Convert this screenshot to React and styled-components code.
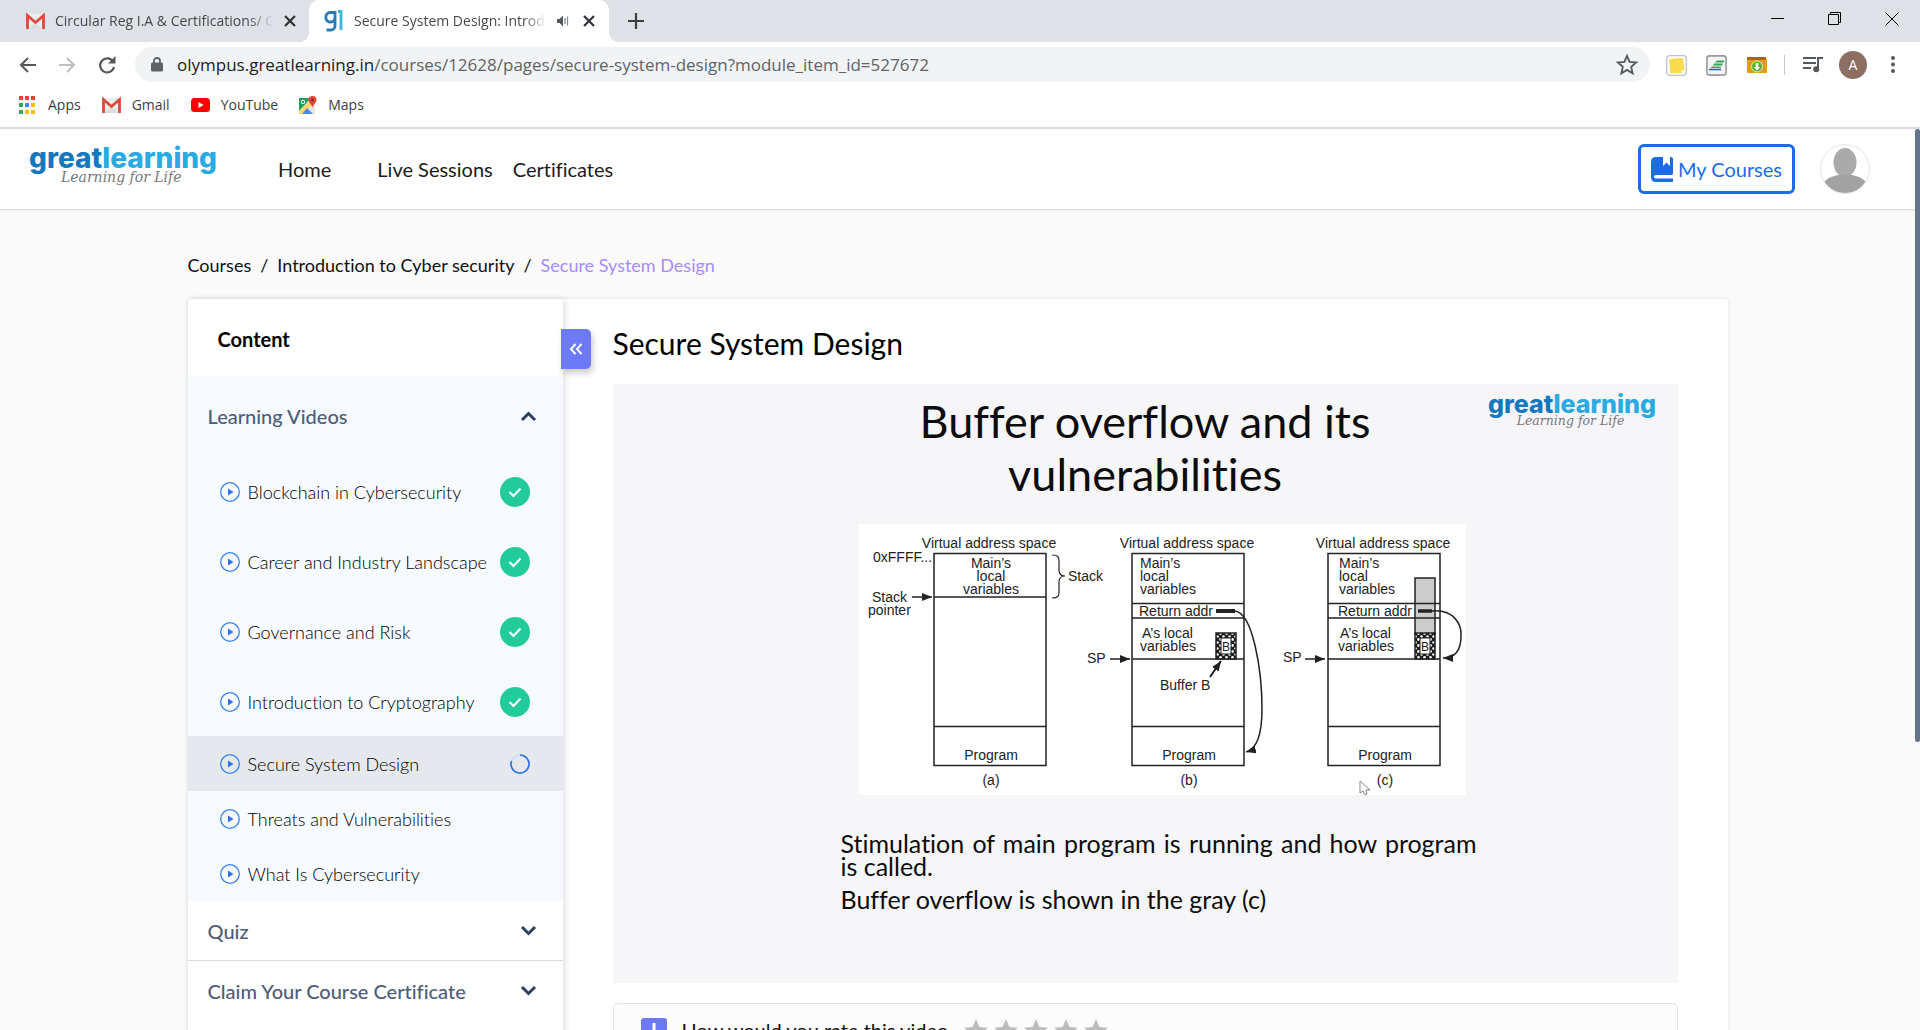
import React from "react";
import styled, { createGlobalStyle } from "styled-components";

const ui = `"Open Sans", "Noto Sans", sans-serif`;
const lato = `Lato, "Liberation Sans", sans-serif`;

const GlobalStyle = createGlobalStyle`
  *, *::before, *::after { box-sizing: border-box; }
  body { margin: 0; background: #fff; font-family: ${lato}; font-variant-ligatures: none; }
  button { font: inherit; border: 0; padding: 0; background: none; cursor: pointer; }
  a { color: inherit; text-decoration: none; }
  ul, ol { list-style: none; margin: 0; padding: 0; }
  h1, h2, p { margin: 0; font-weight: 400; }
  svg { display: block; flex: none; overflow: visible; }
`;

const Window = styled.div`
  height: 100vh;
  display: flex;
  flex-direction: column;
  overflow: hidden;
`;

/* Browser chrome */

const TabStrip = styled.div`
  display: flex;
  height: 42px;
  flex: none;
  background: #dee1e6;
  font-family: ${ui};
  font-size: 14px;
  line-height: 20px;
  color: #45494d;
`;

const Tab = styled.div`
  position: relative;
  display: flex;
  align-items: center;
  gap: 10px;
  width: ${(p) => (p.$active ? 300 : 309)}px;
  padding: 0 ${(p) => (p.$active ? 10 : 13)}px 0 ${(p) => (p.$active ? 15 : 26)}px;
  border-radius: 10px 10px 0 0;
  background: ${(p) => (p.$active ? "#fff" : "transparent")};
  ${(p) => p.$active && `
    &::before, &::after {
      content: "";
      position: absolute;
      bottom: 0;
      width: 10px;
      height: 10px;
    }
    &::before { left: -10px; background: radial-gradient(circle at 0 0, transparent 10px, #fff 10px); }
    &::after { right: -10px; background: radial-gradient(circle at 100% 0, transparent 10px, #fff 10px); }
  `}
`;

const TabTitle = styled.span`
  flex: 1;
  overflow: hidden;
  white-space: nowrap;
  mask-image: linear-gradient(to right, #000 88%, transparent);
`;

const IconButton = styled.button`
  display: grid;
  place-items: center;
  width: ${(p) => p.$w || 20}px;
  height: ${(p) => p.$h || 20}px;
  flex: none;
`;

const NewTab = styled(IconButton)`
  align-self: center;
  margin-left: 16px;
`;

const WindowControls = styled.div`
  display: flex;
  margin-left: auto;
  height: 37px;
`;

const Toolbar = styled.div`
  display: flex;
  align-items: center;
  height: 45px;
  flex: none;
  padding: 0 19px 0 11px;
`;

const NavButtons = styled.div`
  display: flex;
  width: 124px;
  gap: 8px;
`;

const AddressBar = styled.div`
  display: flex;
  align-items: center;
  flex: 1;
  height: 35px;
  margin-right: 16px;
  padding: 0 13px 0 16px;
  gap: 14px;
  border-radius: 18px;
  background: #f1f3f4;
`;

const UrlText = styled.span`
  flex: 1;
  font-family: ${ui};
  font-size: 17px;
  line-height: 24px;
  color: #5f6368;
  b { font-weight: 400; color: #202124; }
`;

const Extensions = styled.div`
  display: flex;
  align-items: center;
  gap: 18px;
`;

const Divider = styled.span`
  width: 1px;
  height: 20px;
  background: #c4c7ca;
  margin: 0 0 0 -2px;
`;

const Profile = styled.button`
  width: 28px;
  height: 28px;
  margin-left: -2px;
  border-radius: 50%;
  background: #8d6e63;
  color: #fff;
  font-family: ${ui};
  font-size: 14px;
  line-height: 28px;
`;

const Bookmarks = styled.nav`
  display: flex;
  gap: 21px;
  height: 42px;
  flex: none;
  padding: 0 18px 4px 19px;
  border-bottom: 2px solid #dadce0;
  font-family: ${ui};
  font-size: 14px;
  line-height: 20px;
  color: #3c4043;
  a { display: flex; align-items: center; gap: 11px; }
`;

/* Site */

const Viewport = styled.div`
  flex: 1;
  min-height: 0;
  display: grid;
  grid-template-columns: minmax(0, 1fr) 5px;
  background: #fafafa;
`;

const Scroller = styled.div`
  min-height: 0;
  overflow: hidden;
`;

const ScrollThumb = styled.div`
  height: 68%;
  background: #64748b;
  border-radius: 3px;
`;

const Header = styled.header`
  display: flex;
  align-items: center;
  height: 81px;
  padding: 0 45px 0 29px;
  border-bottom: 1px solid #dcdde0;
  background: #fff;
  box-shadow: 0 1px 2px rgba(0, 0, 0, 0.05);
`;

const Brand = styled.a`
  display: block;
  width: 249px;
`;

const SiteNav = styled.nav`
  display: flex;
  flex: 1;
  font-size: 20px;
  line-height: 28px;
  color: #1c1c1c;
  a { margin-right: 20px; }
  a:first-child { margin-right: 46px; }
`;

const MyCourses = styled.button`
  display: flex;
  align-items: center;
  gap: 5px;
  height: 50px;
  padding: 0 10px;
  margin-right: 25px;
  border: 3px solid #1a6ce8;
  border-radius: 6px;
  font-size: 20px;
  color: #1a6ce8;
`;

const Avatar = styled.button`
  width: 50px;
  height: 50px;
  border-radius: 50%;
  border: 1px solid #e6e6e8;
  overflow: hidden;
`;

const Page = styled.main`
  max-width: 1540px;
  margin: 0 auto;
  padding-top: 43px;
`;

const Crumbs = styled.ol`
  display: flex;
  gap: 9px;
  margin-bottom: 22px;
  font-size: 18px;
  line-height: 24px;
  color: #111;
  li { display: flex; gap: 9px; }
  li + li::before { content: "/"; }
  [aria-current] { color: #a78bfa; }
`;

const Card = styled.div`
  display: grid;
  grid-template-columns: 375px minmax(0, 1fr);
  min-height: 900px;
  border-radius: 4px;
  background: #fff;
  box-shadow: 0 0 4px rgba(30, 41, 59, 0.12);
`;

const Sidebar = styled.aside`
  position: relative;
  box-shadow: 2px 0 6px rgba(0, 0, 0, 0.12);
`;

const SidebarTitle = styled.h2`
  padding: 28px 30px 25px;
  font-size: 20px;
  line-height: 24px;
  font-weight: 700;
  color: #000;
`;

const Collapse = styled.button`
  position: absolute;
  top: 30px;
  right: -28px;
  display: grid;
  place-items: center;
  width: 30px;
  height: 40px;
  border-radius: 0 5px 5px 0;
  background: #6c7af8;
  box-shadow: 2px 4px 6px rgba(0, 0, 0, 0.2);
`;

const Section = styled.section`
  background: ${(p) => (p.$open ? "#f7faff" : "#fff")};
  border-bottom: ${(p) => (p.$open ? 0 : 1)}px solid #dcdcde;
  &:last-child { border-bottom: 0; }
`;

const SectionHead = styled.button`
  display: flex;
  align-items: center;
  justify-content: space-between;
  width: 100%;
  height: ${(p) => (p.$open ? 80 : 59)}px;
  padding: 0 27px 0 20px;
  font-size: 20px;
  line-height: 26px;
  font-weight: 500;
  color: #4e5d78;
`;

const Lesson = styled.a`
  display: flex;
  align-items: center;
  gap: 8px;
  height: ${(p) => (p.$done ? 70 : 55)}px;
  padding: 1px 33px 0 32px;
  background: ${(p) => (p.$current ? "#e5e8ed" : "transparent")};
  font-size: 18px;
  line-height: 24px;
  font-weight: 300;
  color: #000;
  white-space: nowrap;
  span { flex: 1; }
`;

const Content = styled.div`
  padding: 24px 50px;
`;

const Title = styled.h1`
  margin-bottom: 21px;
  font-size: 30px;
  line-height: 40px;
  color: #000;
`;

const Slide = styled.section`
  position: relative;
  display: flex;
  flex-direction: column;
  align-items: center;
  aspect-ratio: 1065 / 599;
  padding-top: 11px;
  background: #f6f5f8;
  color: #0c0c0c;
`;

const SlideTitle = styled.h2`
  margin-bottom: 23px;
  font-size: 45px;
  line-height: 53px;
  text-align: center;
  max-width: 500px;
`;

const SlideLogo = styled.div`
  position: absolute;
  top: 10px;
  right: 20px;
`;

const SlideText = styled.div`
  width: 636px;
  margin: 37px 0 0 27px;
  font-size: 25px;
  line-height: 23px;
  p + p { margin-top: 10px; }
  p:first-child { text-align: justify; }
`;

const Figure = styled.div`
  margin-left: 34px;
`;

const Rating = styled.div`
  display: flex;
  align-items: center;
  gap: 15px;
  height: 56px;
  margin-top: 20px;
  padding: 0 27px;
  border: 1px solid #e4e4e6;
  border-radius: 5px;
  background: #fcfcfc;
  font-size: 20px;
  line-height: 24px;
  color: #111;
  span { padding-bottom: 3px; }
`;

const Stars = styled.div`
  display: flex;
  gap: 4px;
`;

const StarButton = styled(IconButton)`
  width: 26px;
  height: 26px;
`;

const Logo = ({ width }) => (
  <svg width={width} viewBox="0 0 190 44" role="img" aria-label="great learning, Learning for Life">
    <text x="0" y="21" fontFamily="Inter, sans-serif" fontWeight="800" fontSize="28" fill="#1478bf">
      great<tspan fill="#29aae1">learning</tspan>
    </text>
    <text x="32" y="35" fontFamily='"DejaVu Serif", serif' fontStyle="italic" fontSize="14" fill="#77787b">
      Learning for Life
    </text>
  </svg>
);

const Gmail = () => (
  <svg width="19" height="15" viewBox="0 0 19 15">
    <path d="M1 0h17v15H1z" fill="#ececec" />
    <path d="M3 15 9.500 8l6.500 7z" fill="#dcdcdc" />
    <path d="M1.500 15V1.500l8 7 8-7V15" fill="none" stroke="#d94a3d" strokeWidth="2.800" />
  </svg>
);

const Cross = () => (
  <svg width="12" height="12" viewBox="0 0 12 12" stroke="#303236" strokeWidth="2.200">
    <path d="M1 1l10 10M11 1 1 11" />
  </svg>
);

const GlIcon = () => (
  <svg width="20" height="22" viewBox="0 0 20 22" fill="none" strokeWidth="2.800">
    <path d="M11 2.500H6A4 4.500 0 1 0 6 12h1a4 4.500 0 0 0 4-4.500V16a4 4 0 0 1-4 4H2.500M11 1v9" stroke="#2a7ab8" />
    <path d="M14 1.500h3V20" stroke="#38b6e0" />
  </svg>
);

const Speaker = () => (
  <svg width="12" height="12" viewBox="0 0 12 12">
    <path d="M0 4h2.500L6 .5v11L2.500 8H0z" fill="#54585c" />
    <path d="M8 3v6M10.500 1.500v9" stroke="#8a8d91" strokeWidth="1.300" />
  </svg>
);

const Arrow = ({ color, flip }) => (
  <svg width="17" height="16" viewBox="0 0 17 16" fill="none" stroke={color} strokeWidth="2">
    <path d={flip ? "M0 8h15M8 1l7 7-7 7" : "M17 8H2M9 1 2 8l7 7"} />
  </svg>
);

const Reload = () => (
  <svg width="18" height="18" viewBox="0 0 18 18">
    <path d="M15 5.500A7 7 0 1 0 16 11" fill="none" stroke="#55585c" strokeWidth="2.200" />
    <path d="M17.500 0v7.500H10z" fill="#55585c" />
  </svg>
);

const Lock = () => (
  <svg width="12" height="15" viewBox="0 0 12 15">
    <path d="M3 7V4a3 3 0 0 1 6 0v3" fill="none" stroke="#5f6368" strokeWidth="1.800" />
    <rect y="5.500" width="12" height="9" rx="1.500" fill="#5f6368" />
  </svg>
);

const starPath = "M12 1l3.100 7.300 7.900.7-6 5.200 1.800 7.800L12 17.900 5.200 22 7 14.200 1 9l7.900-.7z";

const Chevron = ({ up }) => (
  <svg width="15" height="10" viewBox="0 0 15 10" fill="none" stroke="#2f3f5f" strokeWidth="3">
    <path d={up ? "M1 9l6.500-6.500L14 9" : "M1 1l6.500 6.500L14 1"} />
  </svg>
);

const Play = () => (
  <svg width="20" height="20" viewBox="0 0 20 20">
    <circle cx="10" cy="10" r="9.300" fill="none" stroke="#3b82f6" strokeWidth="1.300" />
    <path d="M8 6.500v7l5.500-3.500z" fill="#2f74ea" />
  </svg>
);

const Check = () => (
  <svg width="30" height="30" viewBox="0 0 30 30">
    <circle cx="15" cy="15" r="15" fill="#22cb9c" />
    <path d="M9.500 15l4 4 7-7.500" fill="none" stroke="#fff" strokeWidth="2.200" />
  </svg>
);

const Spinner = () => (
  <svg width="20" height="20" viewBox="0 0 20 20" fill="none" strokeWidth="1.700">
    <circle cx="10" cy="10" r="9" stroke="#c9dcfb" />
    <path d="M10 1a9 9 0 1 1-8.500 6" stroke="#2f74ea" />
  </svg>
);

const Space = ({ x, label, children }) => (
  <g>
    <rect x={x} y="29.500" width="112" height="212" fill="none" />
    <path d={`M${x} 202.500h112`} />
    <g stroke="none" fill="#222">
      <text x={x + 55} y="24" textAnchor="middle">Virtual address space</text>
      <text x={x + 57} y="236" textAnchor="middle">Program</text>
      <text x={x + 57} y="261" textAnchor="middle">{label}</text>
    </g>
    {children}
  </g>
);

const BufferB = ({ x }) => (
  <g>
    <rect x={x} y="109" width="20" height="26" fill="url(#speckle)" />
    <rect x={x + 5} y="114" width="10" height="16" fill="#fff" strokeWidth="1" />
    <text x={x + 10} y="127" textAnchor="middle" fontSize="12" stroke="none" fill="#222">B</text>
  </g>
);

const Diagram = () => (
  <svg width="607" height="271" viewBox="0 0 607 271" fontFamily='"Liberation Sans", Arial, sans-serif' fontSize="14" stroke="#222" strokeWidth="1.500" role="img" aria-label="Virtual address space diagrams">
    <defs>
      <pattern id="speckle" width="6" height="6" patternUnits="userSpaceOnUse">
        <rect width="6" height="6" fill="#1c1c1c" stroke="none" />
        <circle cx="1.500" cy="1.500" r="1.400" fill="#fff" stroke="none" />
        <circle cx="4.500" cy="4.500" r="1.300" fill="#fff" stroke="none" />
      </pattern>
      <marker id="head" viewBox="0 0 10 8" refX="10" refY="4" markerWidth="10" markerHeight="8" markerUnits="userSpaceOnUse" orient="auto">
        <path d="M0 0l10 4-10 4z" fill="#222" stroke="none" />
      </marker>
    </defs>
    <rect width="607" height="271" fill="#fff" stroke="none" />
    <Space x={75} label="(a)">
      <path d="M75 73h112" />
      <path d="M53 73h20" markerEnd="url(#head)" />
      <path d="M193 31c6 0 7 2 7 6v9c0 4 2 6 6 6-4 0-6 2-6 6v10c0 4-1 6-7 6" fill="none" strokeWidth="1.200" />
    </Space>
    <Space x={273} label="(b)">
      <path d="M273 79.500h112M273 94h112M273 135h112" />
      <path d="M251 135h20" markerEnd="url(#head)" />
      <BufferB x={357} />
      <path d="M357 87h19" strokeWidth="4" />
      <path d="M376 87c18 2 27 60 27 98 0 26-5 40-16 43" fill="none" markerEnd="url(#head)" />
      <path d="M351 153l11-16" strokeWidth="2" markerEnd="url(#head)" />
    </Space>
    <Space x={469} label="(c)">
      <rect x="556" y="54" width="20" height="56" fill="#ccc" />
      <path d="M469 79.500h112M469 94h112M469 135h112" />
      <path d="M446 135h20" markerEnd="url(#head)" />
      <BufferB x={556} />
      <path d="M559 87h14" strokeWidth="3.500" />
      <path d="M573 87c22-2 30 14 29 25 0 14-6 22-18 22" fill="none" markerEnd="url(#head)" />
    </Space>
    <g stroke="none" fill="#222">
      <text x="14" y="38">0xFFFF...</text>
      <text x="13" y="78">Stack</text>
      <text x="9" y="91">pointer</text>
      <g textAnchor="middle">
        <text x="132" y="44">Main’s</text>
        <text x="132" y="57">local</text>
        <text x="132" y="70">variables</text>
      </g>
      <text x="209" y="57">Stack</text>
      <text x="281" y="44">Main’s</text>
      <text x="281" y="57">local</text>
      <text x="281" y="70">variables</text>
      <text x="280" y="92">Return addr</text>
      <text x="283" y="114">A’s local</text>
      <text x="281" y="127">variables</text>
      <text x="228" y="139">SP</text>
      <text x="301" y="166">Buffer B</text>
      <text x="480" y="44">Main’s</text>
      <text x="480" y="57">local</text>
      <text x="480" y="70">variables</text>
      <text x="479" y="92">Return addr</text>
      <text x="481" y="114">A’s local</text>
      <text x="479" y="127">variables</text>
      <text x="424" y="138">SP</text>
    </g>
    <path d="M501 257v12l3-2 2 4 2-1-1-4h4z" fill="#fff" stroke="#888" strokeWidth="1" />
  </svg>
);

const lessons = [
  ["Blockchain in Cybersecurity", "done"],
  ["Career and Industry Landscape", "done"],
  ["Governance and Risk", "done"],
  ["Introduction to Cryptography", "done"],
  ["Secure System Design", "current"],
  ["Threats and Vulnerabilities", ""],
  ["What Is Cybersecurity", ""],
];

const appColors = ["#ea4335", "#ea4335", "#ea4335", "#34a853", "#4285f4", "#fbbc05", "#34a853", "#fbbc05", "#fbbc05"];

function BrowserChrome() {
  return (
    <>
      <TabStrip>
        <Tab>
          <Gmail />
          <TabTitle>Circular Reg I.A &amp; Certifications/ C</TabTitle>
          <IconButton aria-label="Close tab" $w={12}><Cross /></IconButton>
        </Tab>
        <Tab $active>
          <GlIcon />
          <TabTitle>Secure System Design: Introd</TabTitle>
          <Speaker />
          <IconButton aria-label="Close tab"><Cross /></IconButton>
        </Tab>
        <NewTab aria-label="New tab" $w={22}>
          <svg width="16" height="16" viewBox="0 0 16 16" stroke="#3c4043" strokeWidth="2.200"><path d="M8 0v16M0 8h16" /></svg>
        </NewTab>
        <WindowControls>
          <IconButton aria-label="Minimize" $w={57} $h={37}>
            <svg width="14" height="14" viewBox="0 0 14 14" stroke="#000"><path d="M0 6.500h13" /></svg>
          </IconButton>
          <IconButton aria-label="Restore" $w={57} $h={37}>
            <svg width="14" height="14" viewBox="0 0 14 14" stroke="#000" fill="none"><path d="M.5 2.500h10v10H.5zM2.500 2.500v-2h10v10h-2" /></svg>
          </IconButton>
          <IconButton aria-label="Close" $w={57} $h={37}>
            <svg width="14" height="14" viewBox="0 0 14 14" stroke="#000"><path d="M.5.5l13 13M13.500.5l-13 13" /></svg>
          </IconButton>
        </WindowControls>
      </TabStrip>
      <Toolbar>
        <NavButtons>
          <IconButton aria-label="Back" $w={32} $h={32}><Arrow color="#55585c" /></IconButton>
          <IconButton aria-label="Forward" $w={32} $h={32}><Arrow color="#bcbec1" flip /></IconButton>
          <IconButton aria-label="Reload" $w={32} $h={32}><Reload /></IconButton>
        </NavButtons>
        <AddressBar>
          <Lock />
          <UrlText><b>olympus.greatlearning.in</b>/courses/12628/pages/secure-system-design?module_item_id=527672</UrlText>
          <IconButton aria-label="Bookmark this page">
            <svg width="20" height="20" viewBox="0 0 24 24"><path d={starPath} fill="none" stroke="#55585c" strokeWidth="2.200" /></svg>
          </IconButton>
        </AddressBar>
        <Extensions>
          <IconButton aria-label="Notes" $w={22}>
            <svg width="22" height="21" viewBox="0 0 22 21">
              <rect x=".7" y=".7" width="19.600" height="19.600" rx="3" fill="#fdfdfd" stroke="#c2c2c2" strokeWidth="1.300" />
              <path d="M3 4.500l5-1 9-.5 1.500 12-3 3-11 .5z" fill="#f7dd4d" />
              <path d="M18.500 15l-3 3-.5-3z" fill="#fff3a8" />
            </svg>
          </IconButton>
          <IconButton aria-label="Sheets" $w={22}>
            <svg width="22" height="21" viewBox="0 0 22 21">
              <rect x=".9" y=".9" width="19.200" height="19.200" rx="2.500" fill="#f4f4f4" stroke="#999" strokeWidth="1.600" />
              <path d="M11 5.500h7.500l-1 2H8.500zM8.500 8.500h8.500l-1 2H6.500zM6 11.500h9.500l-1 1.500H4.500z" fill="#3aa655" />
              <path d="M3 14.500h12" stroke="#1c6fae" strokeWidth="1.600" />
            </svg>
          </IconButton>
          <IconButton aria-label="Downloads" $w={22}>
            <svg width="22" height="18" viewBox="0 0 22 18">
              <path d="M1 2q0-1 1-1h7l1 2h10q1 0 1 1v12q0 1-1 1H2q-1 0-1-1z" fill="#e59a1f" />
              <path d="M1 2q0-1 1-1h18v3H1z" fill="#a66612" />
              <circle cx="11" cy="10.500" r="5.500" fill="#5bb52c" stroke="#d6efc2" />
              <path d="M9.700 7h2.600v4h2L11 14.500 7.700 11h2z" fill="#fff" />
            </svg>
          </IconButton>
          <Divider />
          <IconButton aria-label="Media controls">
            <svg width="20" height="17" viewBox="0 0 20 17">
              <path d="M0 2h13M0 7h13M0 12h8M15 13V2h5" fill="none" stroke="#55585c" strokeWidth="2" />
              <circle cx="13.200" cy="13.300" r="3" fill="#55585c" />
            </svg>
          </IconButton>
          <Profile aria-label="Profile">A</Profile>
          <IconButton aria-label="Menu" $w={16}>
            <svg width="4" height="17" viewBox="0 0 4 17" fill="#55585c"><circle cx="2" cy="2" r="2" /><circle cx="2" cy="8.500" r="2" /><circle cx="2" cy="15" r="2" /></svg>
          </IconButton>
        </Extensions>
      </Toolbar>
      <Bookmarks>
        <a href="#apps">
          <svg width="18" height="18" viewBox="0 0 18 18">
            {appColors.map((c, i) => <rect key={i} x={(i % 3) * 6} y={Math.floor(i / 3) * 7} width="4" height="4" fill={c} />)}
          </svg>
          Apps
        </a>
        <a href="#gmail"><Gmail />Gmail</a>
        <a href="#youtube">
          <svg width="19" height="14" viewBox="0 0 19 14"><rect width="19" height="14" rx="3.500" fill="#f00" /><path d="M7.500 4v6l5-3z" fill="#fff" /></svg>
          YouTube
        </a>
        <a href="#maps">
          <svg width="18" height="18" viewBox="0 0 18 18">
            <rect y="2" width="16" height="16" rx="1.500" fill="#e6e6e6" />
            <path d="M0 2h12L0 15z" fill="#1e9e58" />
            <path d="M0 18v-3L12 4l2 4L4 18z" fill="#fdd663" />
            <path d="M3 18l5-6 6 6z" fill="#4a89f3" />
            <path d="M13.500 0a4 4 0 0 1 4 4c0 3-3.500 4-4 8-.5-4-4-5-4-8a4 4 0 0 1 4-4z" fill="#e2463b" />
            <circle cx="13.500" cy="4" r="1.500" fill="#8c2a22" />
            <circle cx="4" cy="6" r="1.700" fill="none" stroke="#fff" />
          </svg>
          Maps
        </a>
      </Bookmarks>
    </>
  );
}

export default function App() {
  return (
    <Window>
      <GlobalStyle />
      <BrowserChrome />
      <Viewport>
        <Scroller>
          <Header>
            <Brand href="#home"><Logo width={190} /></Brand>
            <SiteNav>
              <a href="#home">Home</a>
              <a href="#live">Live Sessions</a>
              <a href="#certificates">Certificates</a>
            </SiteNav>
            <MyCourses>
              <svg width="22" height="25" viewBox="0 0 22 25">
                <path d="M5 0h7v9l3.500-3.500L19 9V0h1q2 0 2 2v14q0 2-1 2H5q-2 0-2 1.800T5 21.500h17V25H5q-5 0-5-5V5q0-5 5-5z" fill="#1a6ce8" />
              </svg>
              My Courses
            </MyCourses>
            <Avatar aria-label="Account">
              <svg width="48" height="48" viewBox="0 0 48 48" fill="#aaa">
                <ellipse cx="24" cy="17.500" rx="11.500" ry="14.500" />
                <path d="M3 37c5-5 11-7 16-7h10c5 0 11 2 16 7a24 24 0 0 1-42 0z" fill="#a2a2a2" />
              </svg>
            </Avatar>
          </Header>
          <Page>
            <Crumbs aria-label="Breadcrumb">
              <li><a href="#courses">Courses</a></li>
              <li><a href="#intro">Introduction to Cyber security</a></li>
              <li><a href="#design" aria-current="page">Secure System Design</a></li>
            </Crumbs>
            <Card>
              <Sidebar>
                <SidebarTitle>Content</SidebarTitle>
                <Collapse aria-label="Collapse sidebar">
                  <svg width="14" height="12" viewBox="0 0 14 12" fill="none" stroke="#fff" strokeWidth="2"><path d="M6.500 1 2 6l4.500 5M12.500 1 8 6l4.500 5" /></svg>
                </Collapse>
                <Section $open>
                  <SectionHead $open aria-expanded="true">Learning Videos<Chevron up /></SectionHead>
                  <ul>
                    {lessons.map(([name, state]) => (
                      <li key={name}>
                        <Lesson href="#lesson" $done={state === "done"} $current={state === "current"}>
                          <Play />
                          <span>{name}</span>
                          {state === "done" && <Check />}
                          {state === "current" && <Spinner />}
                        </Lesson>
                      </li>
                    ))}
                  </ul>
                </Section>
                <Section><SectionHead aria-expanded="false">Quiz<Chevron /></SectionHead></Section>
                <Section><SectionHead aria-expanded="false">Claim Your Course Certificate<Chevron /></SectionHead></Section>
              </Sidebar>
              <Content>
                <Title>Secure System Design</Title>
                <Slide>
                  <SlideLogo><Logo width={170} /></SlideLogo>
                  <SlideTitle>Buffer overflow and its vulnerabilities</SlideTitle>
                  <Figure><Diagram /></Figure>
                  <SlideText>
                    <p>Stimulation of main program is running and how program is called.</p>
                    <p>Buffer overflow is shown in the gray (c)</p>
                  </SlideText>
                </Slide>
                <Rating>
                  <svg width="26" height="26" viewBox="0 0 26 26"><rect width="26" height="26" rx="3" fill="#6c7af8" /><path d="M13 5v8M13 17v3" stroke="#fff" strokeWidth="3" /></svg>
                  <span>How would you rate this video</span>
                  <Stars>
                    {[1, 2, 3, 4, 5].map((n) => (
                      <StarButton key={n} aria-label={`${n} stars`}>
                        <svg width="26" height="26" viewBox="0 0 24 24"><path d={starPath} fill="#bcbcbc" /></svg>
                      </StarButton>
                    ))}
                  </Stars>
                </Rating>
              </Content>
            </Card>
          </Page>
        </Scroller>
        <ScrollThumb />
      </Viewport>
    </Window>
  );
}
